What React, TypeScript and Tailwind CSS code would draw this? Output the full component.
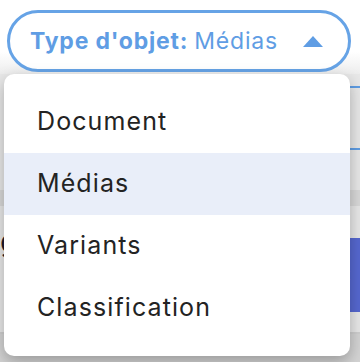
import { useState } from "react";

const options = ["Document", "Médias", "Variants", "Classification"];

export default function App() {
  const [selected, setSelected] = useState("Médias");

  return (
    <div
      className="relative w-[360px] h-[362px] overflow-hidden bg-white"
      style={{ fontFamily: "Inter, 'Noto Sans', sans-serif" }}
    >
      {/* en-tête avec le sélecteur */}
      <div className="h-[74px] pt-[10px] pl-[7px] pr-[9px] bg-gradient-to-b from-white from-70% to-[#ededed]">
        <button className="w-full h-[62px] rounded-full border-[3px] border-[#66a3e6] bg-white flex items-center pl-[20px] pr-[25px] text-[#5f9de4] text-[23px] tracking-[0.8px]">
          <span className="font-bold">Type d'objet:</span>
          <span className="ml-[6px]">{selected}</span>
          <svg width="20" height="11" viewBox="0 0 20 11" className="ml-auto">
            <polygon points="10,0 20,11 0,11" fill="#5f9de4" />
          </svg>
        </button>
      </div>

      {/* contenu de la page derrière le menu */}
      <div className="h-[288px] bg-[#e8e8e8] flex flex-col">
        <div className="h-[12px]" />
        <div className="h-[2px] bg-[#5f9de4] ml-[340px]" />
        <div className="h-[60px]" />
        <div className="h-[2px] bg-[#5f9de4] ml-[340px]" />
        <div className="h-[40px]" />
        <div className="h-[16px] bg-[#d9d9d9]" />
        <div className="h-[32px] bg-[#e8e8e8] flex items-end">
          <span className="text-[30px] leading-none text-[#1c1c2e] mb-[-18px]">g</span>
        </div>
        <div className="h-[74px] flex justify-end">
          <div className="w-[30px] bg-[#5668d0] text-white text-[26px] flex items-center pl-[2px]">C</div>
        </div>
        <div className="h-[20px]" />
        <div className="h-[2px] bg-[#cfcfcf]" />
        <div className="flex-1 bg-[#d4d4d4]" />
      </div>

      {/* menu déroulant */}
      <ul className="absolute left-[4px] top-[74px] w-[346px] py-[17px] bg-white rounded-[10px] shadow-[0_6px_16px_rgba(0,0,0,0.28)]">
        {options.map((opt) => (
          <li
            key={opt}
            onClick={() => setSelected(opt)}
            className={`h-[62px] flex items-center pl-[33px] text-[25px] text-[#232323] tracking-[1.1px] cursor-pointer ${
              opt === selected ? "bg-[#e9eef9]" : ""
            }`}
          >
            {opt}
          </li>
        ))}
      </ul>
    </div>
  );
}
